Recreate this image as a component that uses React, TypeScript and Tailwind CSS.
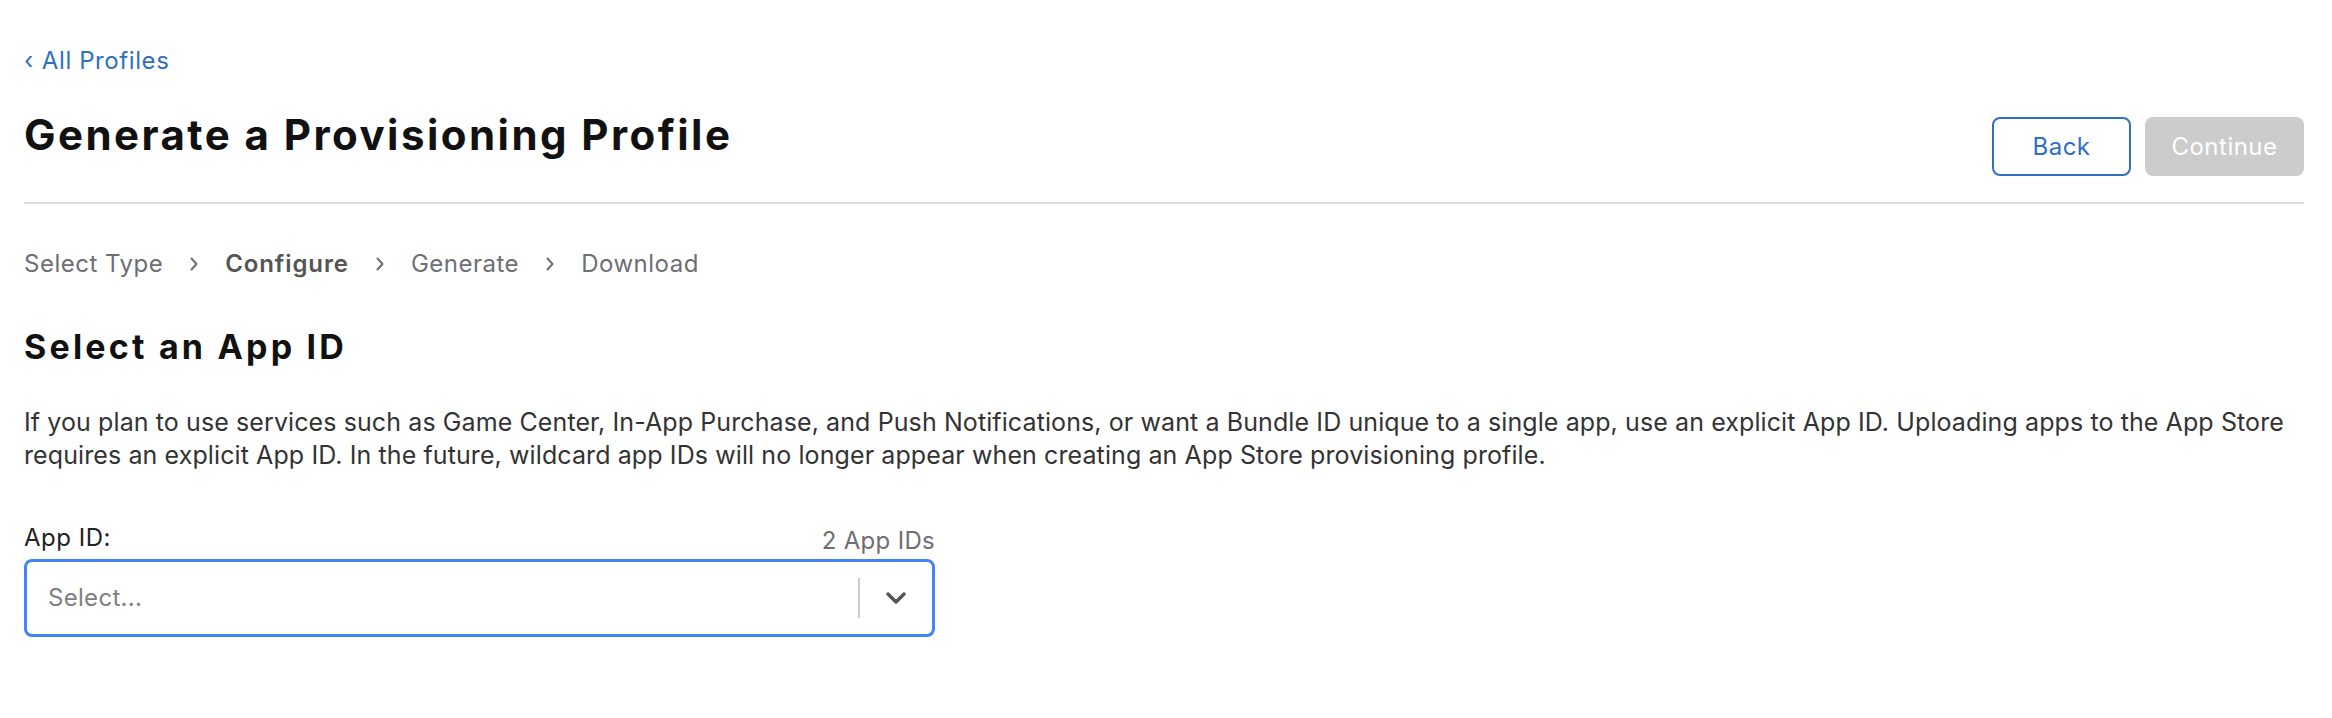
import React from "react";

const font = { fontFamily: "Inter, 'Noto Sans', 'Liberation Sans', sans-serif" };

function Chevron() {
  return (
    <svg width="12" height="20" viewBox="0 0 12 20" className="mx-[25px]" aria-hidden>
      <path d="M3.5 4.5 L8.5 10 L3.5 15.5" fill="none" stroke="#6e6e73" strokeWidth="2" strokeLinecap="round" strokeLinejoin="round" />
    </svg>
  );
}

export default function App() {
  return (
    <div className="min-h-[718px] w-[2332px] bg-white" style={font}>
      <div className="w-[2304px] pl-[24px]">
        <div className="pt-[46px]">
          <a className="inline-flex items-center text-[24px] leading-[30px] tracking-[0.6px] text-[#2f6fc4]">
            <span className="mr-[8px]">‹</span>All Profiles
          </a>
        </div>

        <div className="mt-[35px] flex h-[91px] items-start justify-between">
          <h1 className="whitespace-nowrap text-[42px] font-bold leading-[48px] tracking-[2.45px] text-[#111111]">
            Generate a Provisioning Profile
          </h1>
          <div className="mt-[6px] flex gap-[14px]">
            <button className="h-[59px] w-[139px] rounded-[8px] border-2 border-[#2f6fc4] bg-white text-[24px] tracking-[0.5px] text-[#2f6fc4]">
              Back
            </button>
            <button className="h-[59px] w-[159px] rounded-[8px] bg-[#cccccc] text-[24px] tracking-[0.5px] text-white">
              Continue
            </button>
          </div>
        </div>
        <div className="h-[2px] bg-[#dcdcdc]" />

        <div className="mt-[45px] flex items-center text-[24px] leading-[30px] tracking-[0.5px] text-[#6e6e73]">
          <span>Select Type</span>
          <Chevron />
          <span className="font-semibold tracking-[0.9px] text-[#555555]">Configure</span>
          <Chevron />
          <span>Generate</span>
          <Chevron />
          <span>Download</span>
        </div>

        <h2 className="mt-[48px] whitespace-nowrap text-[34px] font-bold leading-[40px] tracking-[3.2px] text-[#111111]">
          Select an App ID
        </h2>

        <p className="mt-[39px] text-[25px] leading-[33px] tracking-[0.1px] text-[#333333]">
          <span className="whitespace-nowrap">
            If you plan to use services such as Game Center, In-App Purchase, and Push Notifications, or want a Bundle ID unique to a single app, use an explicit App ID. Uploading apps to the App Store
          </span>
          <br />
          <span className="whitespace-nowrap">
            requires an explicit App ID. In the future, wildcard app IDs will no longer appear when creating an App Store provisioning profile.
          </span>
        </p>

        <div className="mt-[51px] w-[911px]">
          <div className="flex items-end justify-between">
            <span className="text-[24px] leading-[30px] tracking-[0.5px] text-[#222222]">App ID:</span>
            <span className="translate-y-[3px] text-[24px] leading-[30px] tracking-[0.3px] text-[#6e6e73]">2 App IDs</span>
          </div>
          <div className="mt-[6px] flex h-[78px] items-center rounded-[8px] border-[3px] border-[#4285f4] bg-white">
            <span className="flex-1 pl-[21px] text-[24px] tracking-[0.3px] text-[#808080]">Select...</span>
            <div className="h-[40px] w-[2px] bg-[#cccccc]" />
            <div className="flex w-[72px] items-center justify-center">
              <svg width="22" height="14" viewBox="0 0 22 14" aria-hidden>
                <path d="M3 3 L11 11 L19 3" fill="none" stroke="#555555" strokeWidth="3.5" strokeLinecap="round" strokeLinejoin="round" />
              </svg>
            </div>
          </div>
        </div>
      </div>
    </div>
  );
}
